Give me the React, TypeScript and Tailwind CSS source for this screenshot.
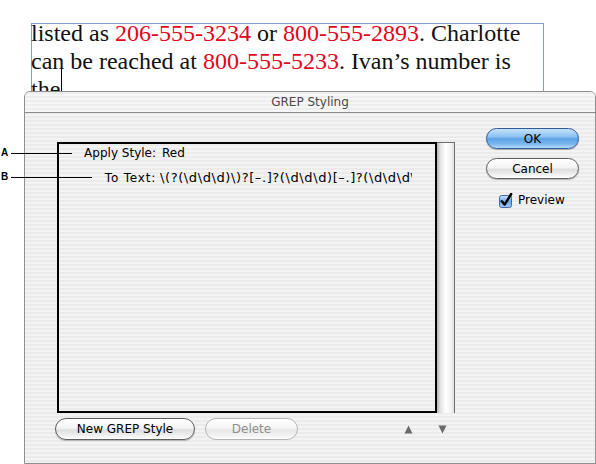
import React from "react";

function Pill({
  children,
  className,
}: {
  children: React.ReactNode;
  className: string;
}) {
  return (
    <div
      className={
        "flex items-center justify-center rounded-full text-[12px] leading-none " +
        className
      }
    >
      {children}
    </div>
  );
}

export default function App() {
  return (
    <div className="relative w-[596px] h-[464px] overflow-hidden bg-white">
      {/* text frame */}
      <div className="ml-[31px] mt-[23px] w-[513px] h-[90px] border border-[#7c9fd4]">
        <div className="-mt-[5px] -ml-[1px] text-[24px] leading-[28px] text-[#111] whitespace-nowrap font-['Liberation_Serif',serif]">
          <div>
            listed as <span className="text-[#e3061d]">206-555-3234</span> or{" "}
            <span className="text-[#e3061d]">800-555-2893</span>. Charlotte
          </div>
          <div>
            can be reached at <span className="text-[#e3061d]">800-555-5233</span>.
            Ivan’s number is
          </div>
          <div>the</div>
        </div>
      </div>
      {/* text cursor */}
      <div className="absolute left-[61px] top-[69px] w-px h-[28px] bg-black" />

      {/* dialog */}
      <div className="absolute left-[24px] top-[91px] w-[572px] h-[373px] rounded-t-[6px] border border-[#8f8f8f] overflow-hidden bg-[repeating-linear-gradient(180deg,#ebebeb_0px,#ebebeb_2px,#f3f3f3_2px,#f3f3f3_4px)] font-['DejaVu_Sans','Noto_Sans',sans-serif]">
        <div className="h-[21px] border-b border-[#8a8a8a] flex items-center justify-center text-[12px] text-[#4a4a4a] bg-[repeating-linear-gradient(180deg,#eeeeee_0px,#eeeeee_2px,#f6f6f6_2px,#f6f6f6_4px)]">
          GREP Styling
        </div>
        <div className="flex">
          {/* left column */}
          <div className="pl-[32px] pt-[29px]">
            <div className="flex h-[271px]">
              <div className="w-[380px] h-full border-2 border-black">
                <div className="grid grid-cols-[97px_252px] gap-x-[4px] gap-y-[7px] text-[12px] leading-[18px] text-black">
                  <div className="text-right">Apply Style:</div>
                  <div className="pl-[2px]">Red</div>
                  <div className="text-right tracking-[0.8px]">To Text:</div>
                  <div className="overflow-hidden whitespace-nowrap text-[13px] tracking-[0.6px]">
                    \(?(\d\d\d)\)?[–.]?(\d\d\d)[–.]?(\d\d\d\d)
                  </div>
                </div>
              </div>
              <div className="w-[18px] h-full border-t border-r border-[#6f6f6f] bg-[linear-gradient(90deg,#b5b5b5_0%,#e2e2e2_20%,#ffffff_50%,#f4f4f4_80%,#e0e0e0_100%)]" />
            </div>
            <div className="mt-[5px] flex items-center h-[22px]">
              <Pill className="-ml-[2px] w-[140px] h-[22px] border border-[#5e5e5e] text-black bg-[linear-gradient(180deg,#ffffff_0%,#f4f4f4_45%,#dedede_55%,#f2f2f2_85%,#ffffff_100%)] shadow-[0_1px_1px_rgba(0,0,0,0.25)]">
                New GREP Style
              </Pill>
              <Pill className="ml-[10px] w-[93px] h-[22px] border border-[#b4b4b4] text-[#8e8e8e] bg-[linear-gradient(180deg,#ffffff_0%,#f6f6f6_45%,#e8e8e8_55%,#f4f4f4_85%,#ffffff_100%)]">
                Delete
              </Pill>
              <svg
                className="ml-[106px]"
                width="9"
                height="9"
                viewBox="0 0 9 9"
              >
                <polygon points="4.5,0.5 8.5,8.5 0.5,8.5" fill="#6a6a6a" />
              </svg>
              <svg
                className="ml-[25px]"
                width="9"
                height="9"
                viewBox="0 0 9 9"
              >
                <polygon points="0.5,0.5 8.5,0.5 4.5,8.5" fill="#6a6a6a" />
              </svg>
            </div>
          </div>
          {/* right column */}
          <div className="pl-[31px] pt-[15px] flex flex-col">
            <Pill className="w-[93px] h-[21px] border border-[#2f5c9e] text-black bg-[linear-gradient(180deg,#c6e2fb_0%,#8ec2f2_40%,#5ea2e6_52%,#7cb8ef_80%,#b7dcfb_100%)] shadow-[0_1px_1px_rgba(0,0,0,0.3)]">
              OK
            </Pill>
            <Pill className="mt-[9px] w-[93px] h-[21px] border border-[#5e5e5e] text-black bg-[linear-gradient(180deg,#ffffff_0%,#f4f4f4_45%,#dedede_55%,#f2f2f2_85%,#ffffff_100%)] shadow-[0_1px_1px_rgba(0,0,0,0.25)]">
              Cancel
            </Pill>
            <div className="mt-[12px] ml-[13px] flex items-center gap-[5px] text-[12px] text-black">
              <svg width="14" height="15" viewBox="0 0 14 15">
                <defs>
                  <linearGradient id="cb" x1="0" y1="0" x2="0" y2="1">
                    <stop offset="0" stopColor="#cfe5fb" />
                    <stop offset="0.5" stopColor="#6aa8ea" />
                    <stop offset="1" stopColor="#9fcaf5" />
                  </linearGradient>
                </defs>
                <rect
                  x="0.5"
                  y="2.5"
                  width="12"
                  height="12"
                  rx="2"
                  fill="url(#cb)"
                  stroke="#3f6aa5"
                />
                <path
                  d="M2.8 8.2 L5.6 11.6 L12.2 1"
                  fill="none"
                  stroke="#000"
                  strokeWidth="2.4"
                  strokeLinecap="round"
                  strokeLinejoin="round"
                />
              </svg>
              <span>Preview</span>
            </div>
          </div>
        </div>
      </div>

      {/* callouts */}
      <div className="absolute left-[1px] top-[146px] text-[10px] leading-[14px] font-bold text-black font-['Liberation_Sans',Arial,sans-serif]">
        A
      </div>
      <div className="absolute left-[11px] top-[153px] w-[61px] h-px bg-black" />
      <div className="absolute left-[1px] top-[170px] text-[10px] leading-[14px] font-bold text-black font-['Liberation_Sans',Arial,sans-serif]">
        B
      </div>
      <div className="absolute left-[11px] top-[177px] w-[81px] h-px bg-black" />
    </div>
  );
}
